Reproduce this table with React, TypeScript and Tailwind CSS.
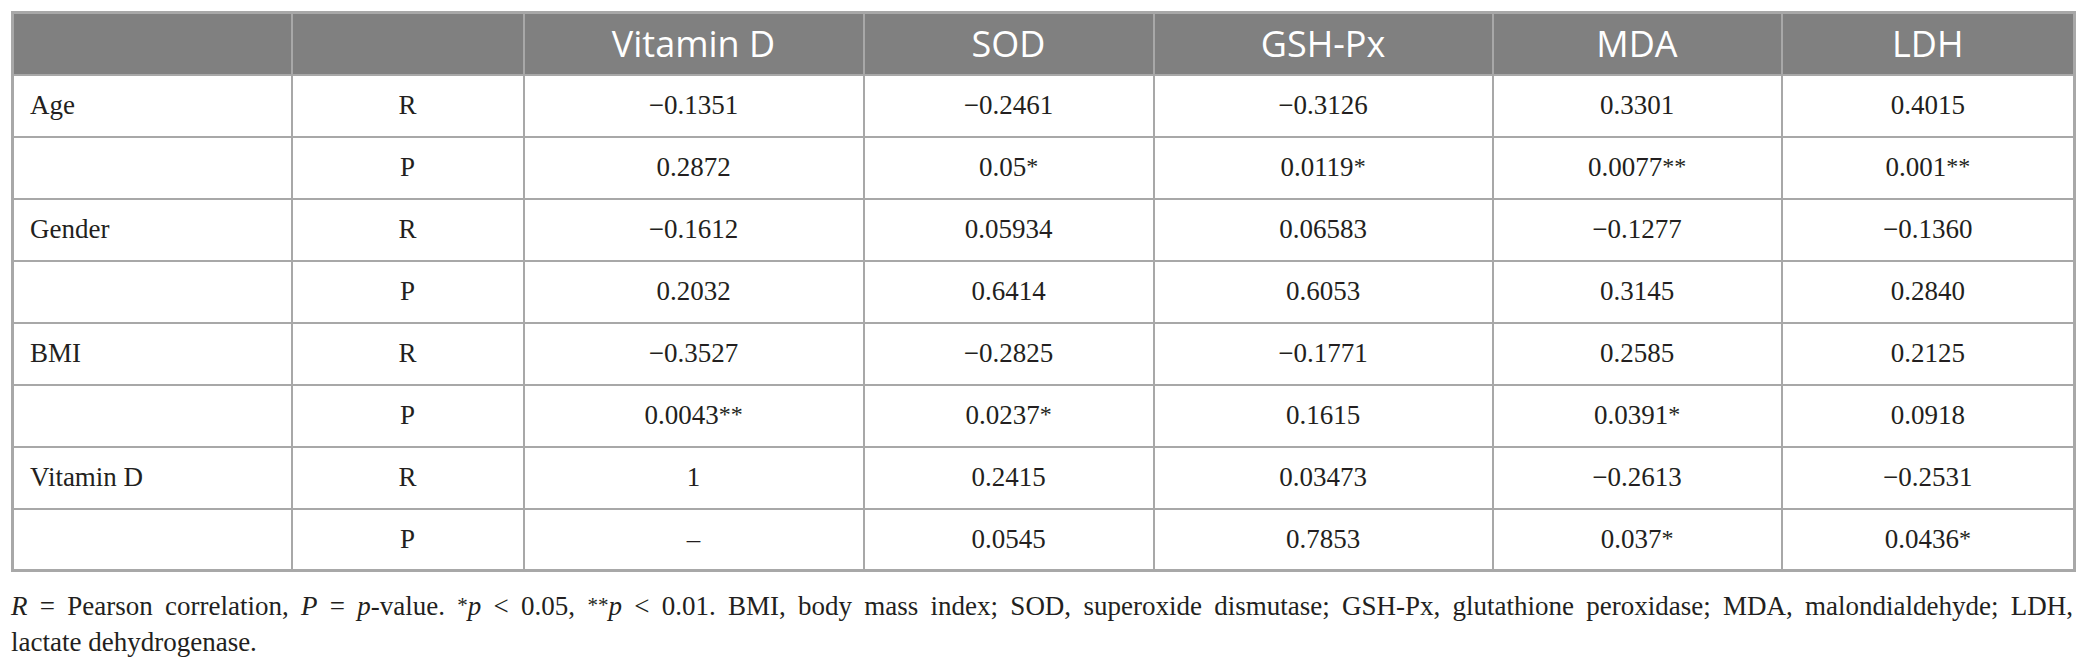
const headers = ['Vitamin D', 'SOD', 'GSH-Px', 'MDA', 'LDH'];

type Row = { label: string; stat: 'R' | 'P'; values: string[] };

const rows: Row[] = [
  { label: 'Age', stat: 'R', values: ['−0.1351', '−0.2461', '−0.3126', '0.3301', '0.4015'] },
  { label: '', stat: 'P', values: ['0.2872', '0.05*', '0.0119*', '0.0077**', '0.001**'] },
  { label: 'Gender', stat: 'R', values: ['−0.1612', '0.05934', '0.06583', '−0.1277', '−0.1360'] },
  { label: '', stat: 'P', values: ['0.2032', '0.6414', '0.6053', '0.3145', '0.2840'] },
  { label: 'BMI', stat: 'R', values: ['−0.3527', '−0.2825', '−0.1771', '0.2585', '0.2125'] },
  { label: '', stat: 'P', values: ['0.0043**', '0.0237*', '0.1615', '0.0391*', '0.0918'] },
  { label: 'Vitamin D', stat: 'R', values: ['1', '0.2415', '0.03473', '−0.2613', '−0.2531'] },
  { label: '', stat: 'P', values: ['–', '0.0545', '0.7853', '0.037*', '0.0436*'] },
];

// splits "0.0119*" into number + raised stars
const Value = ({ text }: { text: string }) => {
  const m = text.match(/^([^*]*)(\*+)$/);
  if (!m) return <>{text}</>;
  return (
    <>
      {m[1]}
      <span className="text-[24px] relative -top-[2px]">{m[2]}</span>
    </>
  );
};

const cell = 'border-2 border-[#a8a8a8] h-[62px] p-0 align-middle';

export default function App() {
  return (
    <div className="bg-white w-[2088px] h-[669px] pt-[11px] pl-[11px]">
      <div className="w-[2062px]">
        <table className="table-fixed w-full border-collapse border-[3px] border-[#a8a8a8] font-['Liberation_Serif',serif] text-[27px] text-[#231f20]">
          <colgroup>
            <col className="w-[279px]" />
            <col className="w-[232px]" />
            <col className="w-[340px]" />
            <col className="w-[290px]" />
            <col className="w-[339px]" />
            <col className="w-[289px]" />
            <col className="w-[293px]" />
          </colgroup>
          <thead>
            <tr className="bg-[#808080] text-white font-['Open_Sans',sans-serif] text-[36px]">
              <th className={cell}></th>
              <th className={cell}></th>
              {headers.map((h) => (
                <th key={h} className={`${cell} font-normal text-center`}>
                  {h}
                </th>
              ))}
            </tr>
          </thead>
          <tbody>
            {rows.map((r, i) => (
              <tr key={i}>
                <td className={`${cell} text-left pl-[16px]`}>{r.label}</td>
                <td className={`${cell} text-center`}>{r.stat}</td>
                {r.values.map((v, j) => (
                  <td key={j} className={`${cell} text-center`}>
                    <Value text={v} />
                  </td>
                ))}
              </tr>
            ))}
          </tbody>
        </table>

        <div className="mt-[16px] font-['Liberation_Serif',serif] text-[27px] leading-[36px] text-[#231f20]">
          <p className="text-justify [text-align-last:justify]">
            <i>R</i> = Pearson correlation, <i>P</i> = <i>p</i>-value. <sup className="text-[21px] top-[-3px]">*</sup>
            <i>p</i> &lt; 0.05, <sup className="text-[21px] top-[-3px]">**</sup>
            <i>p</i> &lt; 0.01. BMI, body mass index; SOD, superoxide dismutase; GSH-Px, glutathione peroxidase; MDA,
            malondialdehyde; LDH,
          </p>
          <p>lactate dehydrogenase.</p>
        </div>
      </div>
    </div>
  );
}
